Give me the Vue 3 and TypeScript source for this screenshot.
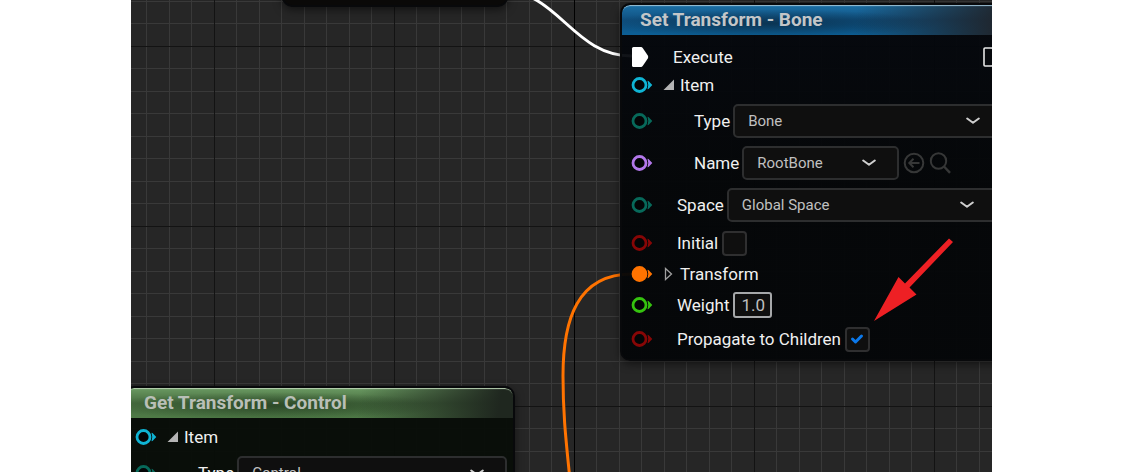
<script setup lang="ts">
import { ref } from 'vue'

type Kind = 'exec' | 'group' | 'select' | 'check' | 'number'

interface Row {
  id: string
  label: string
  kind: Kind
  pin: string
  filled?: boolean
  open?: boolean
  nested?: boolean
  narrow?: boolean
  tools?: boolean
  value?: string
}

interface GraphNode {
  id: string
  title: string
  rows: Row[]
}

const boneNode: GraphNode = {
  id: 'bone',
  title: 'Set Transform - Bone',
  rows: [
    { id: 'execute', label: 'Execute', kind: 'exec', pin: '#ffffff' },
    { id: 'item', label: 'Item', kind: 'group', pin: '#0fb4d4', open: true },
    { id: 'type', label: 'Type', kind: 'select', pin: '#07695a', nested: true, value: 'Bone' },
    { id: 'name', label: 'Name', kind: 'select', pin: '#b277ea', nested: true, narrow: true, tools: true, value: 'RootBone' },
    { id: 'space', label: 'Space', kind: 'select', pin: '#07695a', value: 'Global Space' },
    { id: 'initial', label: 'Initial', kind: 'check', pin: '#870606' },
    { id: 'transform', label: 'Transform', kind: 'group', pin: '#ff7300', filled: true, open: false },
    { id: 'weight', label: 'Weight', kind: 'number', pin: '#35c30f' },
    { id: 'propagate', label: 'Propagate to Children', kind: 'check', pin: '#870606' },
  ],
}

const controlNode: GraphNode = {
  id: 'control',
  title: 'Get Transform - Control',
  rows: [
    { id: 'item', label: 'Item', kind: 'group', pin: '#0fb4d4', open: true },
    { id: 'type', label: 'Type', kind: 'select', pin: '#07695a', nested: true, value: 'Control' },
  ],
}

const nodes = [boneNode, controlNode]

const checks = ref<Record<string, boolean>>({ initial: false, propagate: true })
const weight = ref('1.0')

const minor = 22.5
const lines = (origin: number, count: number) =>
  Array.from({ length: count }, (_, i) => ({
    at: Math.floor(origin + i * minor) + 0.5,
    major: i % 8 === 0,
  }))

const columns = lines(-97, 120)
const rowsOfGrid = lines(-134, 80)
</script>

<template>
  <main class="page">
    <section class="canvas" aria-label="Rig graph">
      <svg class="layer" aria-hidden="true">
        <g v-for="major in [false, true]" :key="String(major)" :class="major ? 'major' : 'minor'">
          <template v-for="c in columns" :key="'c' + c.at">
            <line v-if="c.major === major" :x1="c.at" :x2="c.at" y1="0" y2="100%" />
          </template>
          <template v-for="r in rowsOfGrid" :key="'r' + r.at">
            <line v-if="r.major === major" x1="0" x2="100%" :y1="r.at" :y2="r.at" />
          </template>
        </g>
        <line class="axis" x1="443.500" x2="443.500" y1="0" y2="100%" />
        <path class="wire exec-wire" d="M368 -10C428 -10 441 56 501 56" />
        <path class="wire data-wire" d="M501 274C446 274 432 320 432 376C432 415 435 440 439 480" />
      </svg>

      <div class="node stub"></div>

      <article v-for="node in nodes" :key="node.id" class="node" :class="node.id">
        <h2 class="title">{{ node.title }}</h2>
        <div class="body">
          <div
            v-for="row in node.rows"
            :key="row.id"
            class="row"
            :class="['row-' + row.kind, { nested: row.nested }]"
          >
            <svg v-if="row.kind === 'exec'" class="pin" viewBox="0 0 22 22" aria-hidden="true">
              <path d="M2.500 1H10Q11 1 11.700 2L16.800 9.500Q17.700 11 16.800 12.500L11.700 20Q11 21 10 21H2.500Q1 21 1 19.500V2.500Q1 1 2.500 1Z" :fill="row.pin" />
            </svg>
            <svg v-else class="pin" viewBox="0 0 22 22" aria-hidden="true">
              <circle cx="8.500" cy="11" r="6.500" :stroke="row.pin" stroke-width="2.800" :fill="row.filled ? row.pin : '#030506'" />
              <path d="M16.500 6.800L17.500 7L21.300 11L17.500 15L16.500 15.200Q18 11 16.500 6.800Z" :fill="row.pin" />
            </svg>

            <button v-if="row.kind === 'group'" class="toggle" type="button" :aria-label="row.label" :aria-expanded="row.open">
              <svg viewBox="0 0 12 14" aria-hidden="true">
                <path v-if="row.open" d="M11 1.500V12H0.500Z" fill="#b4b4b4" />
                <path v-else d="M2.500 1.500V12.500L8.500 7Z" fill="none" stroke="#a0a0a0" stroke-width="1.300" />
              </svg>
            </button>

            <span v-if="row.kind === 'group' || row.kind === 'exec'" class="label">{{ row.label }}</span>
            <label v-else class="label" :for="node.id + '-' + row.id">{{ row.label }}</label>

            <span v-if="row.kind === 'select'" class="picker" :class="{ narrow: row.narrow }">
              <select :id="node.id + '-' + row.id">
                <option>{{ row.value }}</option>
              </select>
              <svg class="chevron" viewBox="0 0 14 8" aria-hidden="true">
                <path d="M1.200 1.500L7 5.800L12.800 1.500" fill="none" stroke="#cfcfcf" stroke-width="2" stroke-linecap="round" stroke-linejoin="round" />
              </svg>
            </span>

            <span v-if="row.kind === 'check'" class="tick">
              <input :id="node.id + '-' + row.id" v-model="checks[row.id]" type="checkbox" />
              <svg v-if="checks[row.id]" viewBox="0 0 14 12" aria-hidden="true">
                <path d="M2.500 6L5.500 9L11.500 3" fill="none" stroke="#0b78ea" stroke-width="3" stroke-linecap="round" stroke-linejoin="round" />
              </svg>
            </span>

            <input v-if="row.kind === 'number'" :id="node.id + '-' + row.id" v-model="weight" class="number" type="text" />

            <template v-if="row.tools">
              <button class="tool" type="button" aria-label="Use selected">
                <svg viewBox="0 0 22 22" fill="none" stroke="#363737" stroke-width="2" aria-hidden="true">
                  <circle cx="11" cy="11" r="9.300" />
                  <path d="M16.500 11H6.500M10.500 6.800L6.300 11L10.500 15.200" />
                </svg>
              </button>
              <button class="tool" type="button" aria-label="Browse">
                <svg viewBox="0 0 22 22" fill="none" stroke="#363737" stroke-width="2" aria-hidden="true">
                  <circle cx="9.500" cy="9" r="7.700" />
                  <path d="M15 14.500L21 20.800" stroke-width="2.400" />
                </svg>
              </button>
            </template>

            <svg v-if="row.kind === 'exec'" class="pin out" viewBox="0 0 22 22" aria-hidden="true">
              <path d="M3 2H10L16 9Q17 11 16 13L10 20H3Q2 20 2 19V3Q2 2 3 2Z" fill="#07090d" stroke="#e8e8e8" stroke-width="1.600" />
            </svg>
          </div>
        </div>
      </article>

      <svg class="layer pointer" aria-hidden="true">
        <path d="M743 321L767.500 277L774 283.500L818 238.500L822 242L778.500 287.500L785.500 294.500Z" fill="#ee2024" />
      </svg>
    </section>
  </main>
</template>

<style>
body {
  margin: 0;
  background: #fff;
}
</style>

<style scoped>
.page {
  padding: 0 132px 0 131px;
  font-family: Roboto, "Liberation Sans", sans-serif;
}

.canvas {
  position: relative;
  min-height: 100vh;
  overflow: hidden;
  background: #262626;
}

.layer {
  position: absolute;
  inset: 0;
  width: 100%;
  height: 100%;
}

.pointer {
  pointer-events: none;
}

.minor line {
  stroke: #393939;
}

.major line {
  stroke: #131313;
}

.axis {
  stroke: #000;
}

.wire {
  fill: none;
}

.exec-wire {
  stroke: #fff;
  stroke-width: 3;
}

.data-wire {
  stroke: #ff7300;
  stroke-width: 3;
}

.node {
  position: absolute;
  box-sizing: border-box;
  width: 391px;
  border: 2px solid #08090b;
  border-radius: 10px;
  box-shadow: 0 3px 8px rgba(0, 0, 0, 0.5);
  overflow: hidden;
}

.stub {
  left: 151px;
  top: -60px;
  width: 226px;
  height: 67px;
  background: #0a0908;
}

.bone {
  left: 489px;
  top: 3px;
  background: linear-gradient(rgba(4, 7, 13, 0.94), rgba(4, 6, 8, 0.96) 50%);
}

.control {
  left: -7px;
  top: 386px;
  background: rgba(7, 13, 7, 0.95);
}

.title {
  margin: 0;
  padding-left: 18px;
  height: 30px;
  line-height: 29px;
  font-size: 19px;
  font-weight: 700;
  color: #c3c6c8;
  border-radius: 8px 8px 0 0;
}

.bone .title {
  background:
    linear-gradient(100deg, transparent 60%, #20242a 98%),
    radial-gradient(ellipse 170px 14px at 38% 62%, rgba(8, 32, 50, 0.6), transparent),
    linear-gradient(#1c70a6, #0f5080 50%, #0c5f96);
  box-shadow: inset 0 2px 1px -1px #9cc0d4;
}

.control .title {
  color: #b9bfb7;
  background:
    linear-gradient(100deg, transparent 60%, #1f271f 96%),
    radial-gradient(ellipse 170px 14px at 38% 60%, rgba(26, 48, 24, 0.6), transparent),
    linear-gradient(#6b9a62, #466c3f 50%, #4f7b47);
  box-shadow: inset 0 2px 1px -1px #b8d0b2;
}

.body {
  padding: 8px 0 3px 9px;
}

.control .body {
  padding-top: 5px;
  padding-bottom: 40px;
}

.row {
  display: flex;
  align-items: center;
  height: 34px;
  white-space: nowrap;
}

.row-exec,
.row-group {
  height: 28px;
}

.row-select {
  height: 42px;
}

.row-group + .nested {
  margin-top: 1px;
}

.pin {
  flex: none;
  width: 22px;
  height: 22px;
  margin-right: 24px;
}

.row-exec .pin {
  margin-right: 20px;
}

.nested .pin {
  margin-right: 41px;
}

.row-group .pin {
  margin-right: 10px;
}

.row-exec .out {
  margin-left: auto;
  margin-right: 5px;
}

.toggle,
.tool {
  flex: none;
  display: block;
  padding: 0;
  border: 0;
  background: none;
}

.toggle {
  width: 12px;
  height: 14px;
  margin-right: 5px;
}

.toggle svg,
.tool svg {
  display: block;
  width: 100%;
  height: 100%;
}

.tool {
  width: 22px;
  height: 22px;
  margin-left: 4px;
}

.label {
  font-size: 17px;
  line-height: 22px;
  color: #f0f0f0;
}

.picker {
  position: relative;
  flex: none;
  width: 270px;
  margin-left: 3px;
}

.picker.narrow {
  width: 157px;
}

.picker select {
  display: block;
  box-sizing: border-box;
  width: 100%;
  height: 34px;
  padding: 0 40px 0 13px;
  appearance: none;
  border: 2px solid #2d2e2f;
  border-radius: 5px;
  background: #0f0f0f;
  color: #c0c0c0;
  font-family: inherit;
  font-size: 15px;
}

.chevron {
  position: absolute;
  right: 23px;
  top: 13px;
  width: 14px;
  height: 8px;
  pointer-events: none;
}

.tick {
  position: relative;
  flex: none;
  width: 25px;
  height: 25px;
  margin-left: 4px;
}

.tick input {
  display: block;
  box-sizing: border-box;
  width: 100%;
  height: 100%;
  margin: 0;
  appearance: none;
  border: 2px solid #2f2f30;
  border-radius: 4px;
  background: #0f0f0f;
}

.tick svg {
  position: absolute;
  left: 5px;
  top: 6px;
  width: 14px;
  height: 12px;
  pointer-events: none;
}

.number {
  box-sizing: border-box;
  width: 39px;
  height: 26px;
  margin-left: 4px;
  padding: 0 0 0 6px;
  border: 2px solid #a6a8aa;
  border-radius: 3px;
  background: #0f0f0f;
  color: #c0c0c0;
  font-family: inherit;
  font-size: 17px;
}
</style>
